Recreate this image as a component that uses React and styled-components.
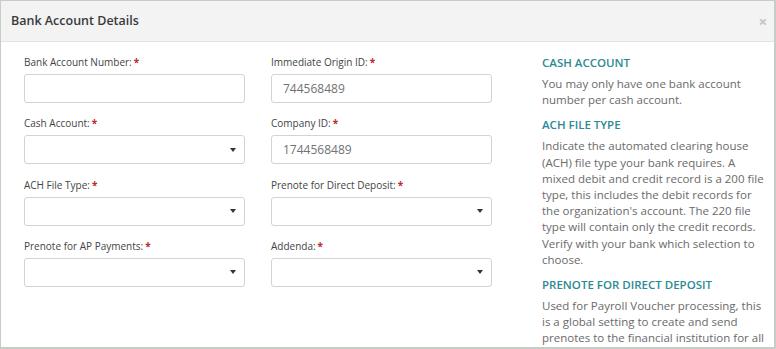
import styled, { createGlobalStyle } from "styled-components";

const Global = createGlobalStyle`
  html, body {
    margin: 0;
    padding: 0;
    background: #c6cdc6;
    font-family: "Open Sans", "Liberation Sans", sans-serif;
  }
`;

const Frame = styled.div`
  padding: 1px 2px 2px 1px;
  width: 776px;
  height: 349px;
  box-sizing: border-box;
`;

const Modal = styled.div`
  width: 773px;
  height: 346px;
  background: #fff;
  overflow: hidden;
  display: flex;
  flex-direction: column;
`;

const Header = styled.div`
  height: 40px;
  flex-shrink: 0;
  background: #f3f3f3;
  border-bottom: 1px solid #e2e2e2;
  display: flex;
  align-items: center;
  justify-content: space-between;
  padding: 0 7px 0 10px;
`;

const Title = styled.h4`
  margin: 0 0 1px;
  font-size: 12.5px;
  font-weight: 600;
  color: #3a3a3a;
`;

const Close = styled.span`
  font-size: 15px;
  color: #c4c4c4;
  line-height: 1;
  font-weight: 700;
`;

const Body = styled.div`
  display: flex;
  padding: 13px 0 0 23px;
  gap: 50px;
`;

const Form = styled.div`
  display: grid;
  grid-template-columns: 221px 221px;
  column-gap: 26px;
  row-gap: 13.3px;
  align-content: start;
`;

const Field = styled.div`
  display: flex;
  flex-direction: column;
`;

const Label = styled.label`
  font-size: 10px;
  line-height: 14px;
  color: #444;
  margin-bottom: 5px;
  &::after {
    content: "*";
    color: #c0282d;
    margin-left: 2px;
    font-weight: 700;
  }
`;

const Box = styled.div`
  height: 29px;
  box-sizing: border-box;
  border: 1px solid #d3d3d3;
  border-radius: 3px;
  display: flex;
  align-items: center;
  padding: 0 12px 0 11px;
  font-size: 12px;
  color: #727272;
  justify-content: space-between;
`;

const Caret = styled.span`
  width: 0;
  height: 0;
  margin-left: auto;
  border-left: 3.5px solid transparent;
  border-right: 3.5px solid transparent;
  border-top: 4px solid #333;
  margin-right: -4px;
`;

const Help = styled.div`
  width: 224px;
  padding-top: 0;
`;

const HelpTitle = styled.h5`
  margin: 0 0 5px;
  font-size: 11.5px;
  line-height: 16px;
  font-weight: 600;
  color: #2b8a93;
  text-transform: uppercase;
`;

const HelpText = styled.p`
  margin: 0 0 9px;
  font-size: 11.5px;
  line-height: 16.2px;
  color: #6a6a6a;
`;

const fields = [
  { label: "Bank Account Number:" },
  { label: "Immediate Origin ID:", value: "744568489" },
  { label: "Cash Account:", select: true },
  { label: "Company ID:", value: "1744568489" },
  { label: "ACH File Type:", select: true },
  { label: "Prenote for Direct Deposit:", select: true },
  { label: "Prenote for AP Payments:", select: true },
  { label: "Addenda:", select: true },
];

const help = [
  {
    title: "Cash Account",
    text: "You may only have one bank account number per cash account.",
  },
  {
    title: "ACH File Type",
    text: "Indicate the automated clearing house (ACH) file type your bank requires. A mixed debit and credit record is a 200 file type, this includes the debit records for the organization's account. The 220 file type will contain only the credit records. Verify with your bank which selection to choose.",
  },
  {
    title: "Prenote for Direct Deposit",
    text: "Used for Payroll Voucher processing, this is a global setting to create and send prenotes to the financial institution for all employees set up for direct deposit.",
  },
];

export default function App() {
  return (
    <Frame>
      <Global />
      <Modal>
        <Header>
          <Title>Bank Account Details</Title>
          <Close>×</Close>
        </Header>
        <Body>
          <Form>
            {fields.map((f) => (
              <Field key={f.label}>
                <Label>{f.label}</Label>
                <Box>
                  {f.value}
                  {f.select && <Caret />}
                </Box>
              </Field>
            ))}
          </Form>
          <Help>
            {help.map((h) => (
              <div key={h.title}>
                <HelpTitle>{h.title}</HelpTitle>
                <HelpText>{h.text}</HelpText>
              </div>
            ))}
          </Help>
        </Body>
      </Modal>
    </Frame>
  );
}
